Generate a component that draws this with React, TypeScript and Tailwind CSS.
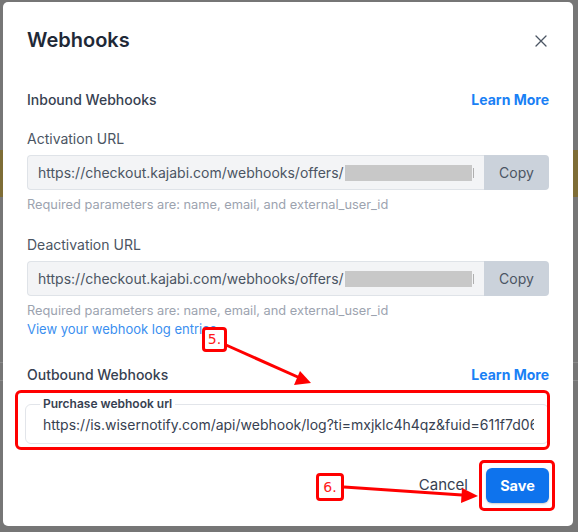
import React from "react";

const font = { fontFamily: "Inter, 'Noto Sans', sans-serif" };

function UrlRow({ label }: { label: string }) {
  return (
    <div className="flex flex-col">
      <div className="text-[14px] leading-5 text-[#4b5563]">{label}</div>
      <div className="mt-[6px] flex h-[35px] w-full">
        <div className="flex flex-1 items-center rounded-l-[4px] border border-r-0 border-[#dfe3e8] bg-[#f3f4f6] pl-[10px] overflow-hidden">
          <span className="whitespace-nowrap text-[14px] text-[#4b5563]">https://checkout.kajabi.com/webhooks/offers/</span>
          <span className="ml-[1px] h-[16px] w-[127px] shrink-0 bg-[#c8c8c8]" />
          <span className="ml-[1px] h-[10px] w-[1px] shrink-0 bg-[#b0b0b0]" />
        </div>
        <div className="flex w-[65px] items-center justify-center rounded-r-[4px] bg-[#cbd2db] text-[14px] text-[#4b5563]">
          Copy
        </div>
      </div>
      <div className="mt-[7px] text-[12.8px] leading-4 text-[#9ca3af]">
        Required parameters are: name, email, and external_user_id
      </div>
    </div>
  );
}

export default function App() {
  return (
    <div className="relative h-[532px] w-[578px] overflow-hidden bg-[#767676]" style={font}>
      <div className="absolute left-0 top-[150px] h-[47px] w-full bg-[#7e6d36]" />
      <div className="absolute left-0 top-[362px] h-px w-full bg-[#8a8a8a]" />
      <div className="absolute left-0 top-[380px] h-px w-full bg-[#8a8a8a]" />

      <div className="relative ml-[3px] mt-[2px] h-[524px] w-[570px] rounded-[5px] bg-white px-[24px] pt-[24px]">
        <div className="flex items-center justify-between">
          <div className="text-[20px] font-semibold leading-7 text-[#1f2937]">Webhooks</div>
          <svg width="12" height="12" viewBox="0 0 12 12" className="mr-[2px] mt-[1px]">
            <path d="M1 1L11 11M11 1L1 11" stroke="#4b5563" strokeWidth="1.3" strokeLinecap="round" />
          </svg>
        </div>

        <div className="mt-[36px] flex items-center justify-between">
          <div className="text-[14px] font-[550] leading-5 text-[#374151]">Inbound Webhooks</div>
          <div className="text-[14px] font-bold leading-5 text-[#1a80f5]">Learn More</div>
        </div>

        <div className="mt-[19px]">
          <UrlRow label="Activation URL" />
        </div>
        <div className="mt-[22px]">
          <UrlRow label="Deactivation URL" />
        </div>
        <div className="mt-[2px] text-[13px] leading-4 text-[#3b8ff0]">View your webhook log entries</div>

        <div className="mt-[28px] flex items-center justify-between">
          <div className="text-[14px] font-[550] leading-5 text-[#374151]">Outbound Webhooks</div>
          <div className="text-[14px] font-bold leading-5 text-[#1a80f5]">Learn More</div>
        </div>

        <fieldset className="mt-[11px] ml-[-2px] h-[48px] min-w-0 rounded-[6px] border border-[#e2e5ea] pl-[17px] pr-[14px]">
          <legend className="ml-[-3px] px-[3px] text-[12px] font-semibold leading-4 text-[#374151]">Purchase webhook url</legend>
          <div className="mt-[3px] w-full min-w-0 whitespace-nowrap overflow-hidden text-[14px] leading-5 text-[#374151]">
            https://is.wisernotify.com/api/webhook/log?ti=mxjklc4h4qz&fuid=611f7d06
          </div>
        </fieldset>

        <div className="mt-[24px] flex items-center justify-end gap-[18px]">
          <div className="text-[15px] text-[#374151]">Cancel</div>
          <div className="flex h-[35px] w-[63px] items-center justify-center rounded-[6px] bg-[#0e73ed] text-[14.5px] font-bold text-white shadow-[0_1px_2px_rgba(0,0,0,0.2)]">
            Save
          </div>
        </div>
      </div>

      {/* annotations */}
      <div className="absolute left-[15px] top-[390px] h-[60px] w-[535px] rounded-[6px] border-[3px] border-[#ff0000]" />
      <div className="absolute left-[479px] top-[460px] h-[51px] w-[76px] rounded-[5px] border-[3px] border-[#ff0000]" />
      <div
        className="absolute left-[202px] top-[327px] flex h-[25px] w-[25px] items-center justify-center rounded-[4px] border-[3px] border-[#ff0000] bg-white text-[14px] text-[#ff1a1a]"
        style={{ fontFamily: "'DejaVu Sans', sans-serif" }}
      >
        5.
      </div>
      <div
        className="absolute left-[316px] top-[473px] flex h-[28px] w-[28px] items-center justify-center rounded-[4px] border-[3px] border-[#ff0000] bg-white text-[14px] text-[#ff1a1a]"
        style={{ fontFamily: "'DejaVu Sans', sans-serif" }}
      >
        6.
      </div>
      <svg className="absolute left-0 top-0" width="578" height="532" viewBox="0 0 578 532">
        <line x1="226" y1="345" x2="300" y2="378" stroke="#ff0000" strokeWidth="3" />
        <polygon points="311,383 294,385 300,371" fill="#ff0000" />
        <line x1="344" y1="487" x2="462" y2="495" stroke="#ff0000" strokeWidth="3" />
        <polygon points="478,496 461,503 462,488" fill="#ff0000" />
      </svg>
    </div>
  );
}
